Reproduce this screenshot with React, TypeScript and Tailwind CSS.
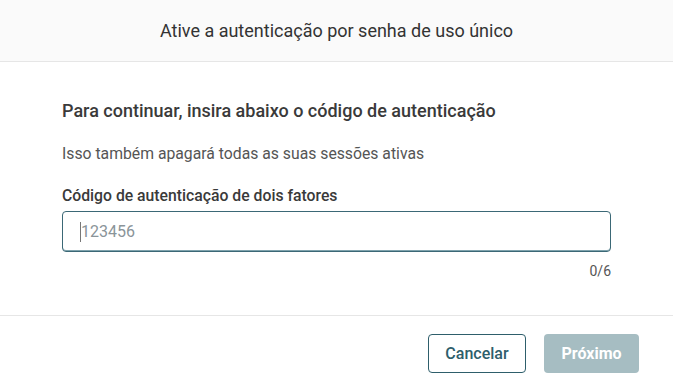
export default function App() {
  return (
    <div className="flex h-[391px] w-[673px] flex-col bg-white font-['Roboto',sans-serif] text-[#333]">
      <header className="flex h-[62px] shrink-0 items-center justify-center border-b border-[#e6e6e6] bg-[#fafafa]">
        <h1 className="text-[18px] font-normal text-[#333]">Ative a autenticação por senha de uso único</h1>
      </header>

      <main className="flex-1 px-[62px] pt-[36px]">
        <h2 className="text-[18px] font-medium leading-[26px] text-[#3a3a3a]">
          Para continuar, insira abaixo o código de autenticação
        </h2>
        <p className="mt-[19px] text-[15.75px] leading-[22px] text-[#555]">Isso também apagará todas as suas sessões ativas</p>

        <label className="mt-[20px] block text-[15.75px] font-medium leading-[22px] text-[#3a3a3a]">
          Código de autenticação de dois fatores
        </label>
        <div className="mt-[4px] flex h-[41px] w-[549px] items-center rounded-[4px] border border-[#3b6876] pl-[17px] shadow-[inset_0_-1px_0_#7fa3ad]">
          <span className="h-[20px] w-px bg-[#777]" />
          <input
            className="h-full flex-1 bg-transparent text-[16px] text-[#333] outline-none placeholder:text-[#8a9499]"
            placeholder="123456"
          />
        </div>
        <div className="mt-[9px] w-[549px] text-right text-[14px] leading-[20px] text-[#555]">0/6</div>
      </main>

      <footer className="flex h-[76px] shrink-0 items-center justify-end gap-[18px] border-t border-[#e6e6e6] pr-[34px]">
        <button className="h-[39px] w-[98px] rounded-[4px] border border-[#2e5e6b] bg-white text-[16px] font-medium text-[#2e5e6b]">
          Cancelar
        </button>
        <button className="h-[39px] w-[95px] rounded-[4px] bg-[#a6bdc2] text-[16px] font-bold text-white">Próximo</button>
      </footer>
    </div>
  )
}
